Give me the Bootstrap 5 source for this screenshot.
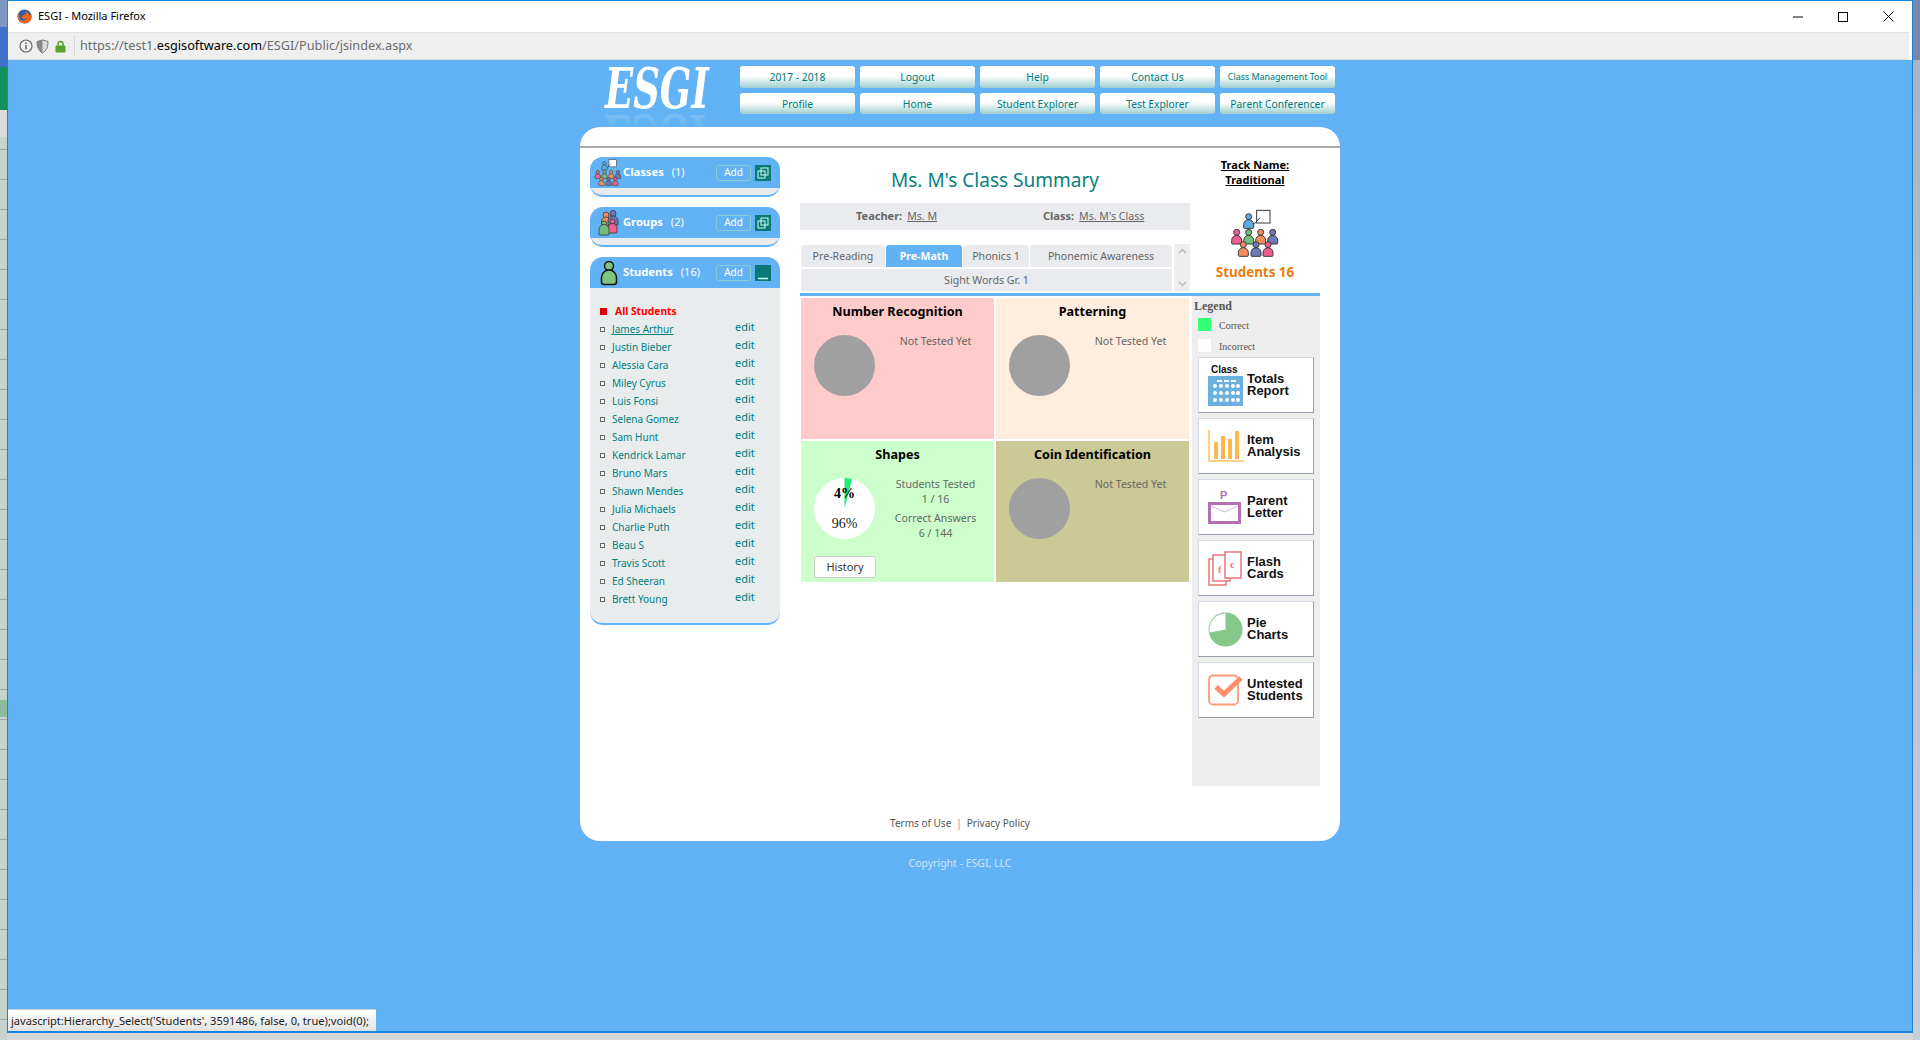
<!doctype html>
<html lang="en">

<head>
  <meta charset="utf-8" />
  <meta name="viewport" content="width=device-width, initial-scale=1" />
  <title>ESGI - Mozilla Firefox</title>
  <link href="https://cdn.jsdelivr.net/npm/bootstrap@5.3.0/dist/css/bootstrap.min.css" rel="stylesheet" />
  <style>
    html, body { height: 100%; }
    body {
      margin: 0;
      overflow: hidden;
      font-family: "Noto Sans", "Open Sans", sans-serif;
      font-size: 10.6px;
      background-color: #d3d8d6;
      background-image:
        linear-gradient(to bottom, #7f96c2 0, #7f96c2 27px, #3f71c9 27px, #3f71c9 67px, #14905a 67px, #14905a 110px, #dcdcdc 110px, #dcdcdc 137px, transparent 137px),
        linear-gradient(to bottom, transparent 700px, #8dbb9d 700px, #8dbb9d 717px, transparent 717px),
        repeating-linear-gradient(to bottom, #c5d3cc 0, #c5d3cc 29px, #9aa5a0 29px, #9aa5a0 30px),
        linear-gradient(to bottom, #7787aa 0, #7787aa 60px, #aab3c4 60px, #c9cfd6 100%);
      background-size: 7px 100%, 7px 100%, 7px 100%, 7px 100%;
      background-position: left top, left top, left top, right top;
      background-repeat: no-repeat;
    }
    .win-frame { margin-left: 7px; width: 1906px; height: 1033px; border: 1px solid #1883d7; border-bottom-width: 2px; background: #fff; }
    .win-title { height: 31px; padding-left: 9px; font-size: 11px; color: #000; }
    .title-left { gap: 6px; }
    .win-btns { gap: 35px; padding-right: 18px; }
    .addr-bar { height: 28px; margin-right: 3px; background: #efefef; border-top: 1px solid #e2e2e2; border-bottom: 1px solid #ddd; padding-left: 11px; font-size: 12.7px; color: #6d6d6d; }
    .addr-sep { width: 1px; height: 20px; background: #d8d8d8; margin: 0 5px 0 8px; }
    .addr-shield { margin-left: 3px; }
    .addr-lock { margin-left: 6px; }
    .addr-host { color: #000; }
    .blue-page { background: #62b3f5; }
    .page-wrap { width: 760px; }
    .top-head { height: 67px; padding-top: 6px; }
    .logo-box { width: 160px; padding-left: 25px; }
    .logo-txt { font-family: "DejaVu Serif", serif; font-weight: 700; font-style: italic; font-size: 56px; line-height: 56px; color: #fff; transform: scaleX(.66); transform-origin: left top; width: 165px; margin-top: -6px; -webkit-box-reflect: below -9px linear-gradient(transparent 55%, rgba(255, 255, 255, .14) 85%); }
    .head-grid { grid-template-columns: repeat(5, 115px); grid-template-rows: 22px 21px; gap: 5px; }
    .head-btn { padding: 0; border: 0; border-radius: 3px; font-size: 10.3px; line-height: 20px; color: #007a7a; background: linear-gradient(to bottom, #fff 0, #fff 45%, #9fcfce 100%); }
    .head-btn-sm { font-size: 8.9px; }
    .main-card { height: 714px; background: #fff; border-radius: 20px; position: relative; }
    .card-strip { height: 21px; border-bottom: 2px solid #aaa; }
    .side-col { width: 190px; margin: 9px 0 0 10px; }
    .side-box { background: #e9eced; border-radius: 13px; border-bottom: 2px solid #62b3f5; margin-bottom: 10px; }
    .side-head { height: 31px; background: #62b3f5; border-radius: 13px 13px 0 0; padding-left: 4px; color: #fff; }
    .side-ico { width: 29px; }
    .side-name { font-size: 11.2px; font-weight: 700; }
    .side-count { margin-left: 8px; font-size: 11px; }
    .add-btn { width: 35px; height: 16px; margin-right: 4px; padding: 0; border: 1px solid #8ccbd4; border-radius: 3px; background: transparent; color: #fff; font-size: 10px; line-height: 13px; }
    .tog-btn { width: 16px; height: 16px; margin-right: 9px; background: #0a7a78; }
    .classes-body { height: 7px; }
    .student-list { padding: 14px 0 15px 10px; margin: 0; list-style: none; font-size: 10px; line-height: 18px; color: #007f80; }
    .student-list li { height: 18px; }
    .bullet { width: 5px; height: 5px; border: 1px solid #666; background: #f4f4f4; margin-right: 7px; }
    .bullet-all { width: 7px; height: 7px; background: #d00; border: 0; margin-right: 8px; }
    .all-name { color: #f00; font-weight: 700; font-size: 10.3px; }
    .stu-name { width: 123px; color: #007f80; text-decoration: none; }
    .stu-edit { color: #007f80; margin-top: -4px; font-size: 11px; text-decoration: none; }
    .center-col { width: 520px; margin-left: 20px; }
    .sum-top { height: 145px; }
    .sum-left { width: 390px; }
    .sum-title { height: 55px; font-size: 19px; line-height: 26px; padding-top: 19px; color: #0a8080; text-align: center; font-weight: 400; margin-bottom: 0; }
    .info-bar { height: 27px; background: #e9ebee; color: #666; margin-bottom: 15px; }
    .info-bar a { color: #666; margin-left: 5px; }
    .info-bar b { font-size: 11px; }
    .info-one { width: 243px; padding-left: 56px; }
    .tab-wrap { padding-left: 1px; }
    .tab-list { width: 372px; gap: 1px; flex-wrap: wrap; }
    .tab-pill { height: 22px; line-height: 22px; background: #e9ebee; color: #666; text-align: center; border-radius: 3px 3px 0 0; }
    .tab-on { background: #62b3f5; color: #fff; font-weight: 700; }
    .tab-scroll { width: 16px; margin: -1px 0 0 1px; height: 47px; background: #eeeeee; color: #bbb; padding: 4px 0; }
    .track-col { width: 130px; color: #000; padding-top: 9px; }
    .track-name { font-weight: 700; font-size: 11px; line-height: 15px; text-decoration: underline; margin-top: 0; margin-bottom: 22px; }
    .stu-total { font-size: 13.4px; font-weight: 700; color: #e87c0c; line-height: 18px; margin-top: 4px; }
    .blue-rule { height: 3px; background: #62b3f5; margin-top: 0; }
    .sum-bottom { height: 490px; }
    .test-grid { width: 392px; padding: 2px 0 0 1px; grid-template-columns: 193px 193px; grid-auto-rows: 141px; gap: 2px; align-content: start; }
    .test-cell { padding: 5px 0 0 13px; color: #666; position: relative; }
    .test-name { margin: 0 0 0 -13px; font-size: 12.6px; line-height: 18px; font-weight: 700; color: #000; text-align: center; }
    .test-body { margin-top: 14px; }
    .grey-pie { width: 61px; height: 61px; border-radius: 50%; background: #a0a0a0; }
    .test-note { width: 119px; padding-left: 2px; text-align: center; margin-top: -1px; line-height: 15px; }
    .cell-red { background: #ffcaca; }
    .cell-peach { background: #ffeddd; }
    .cell-green { background: #ccffcc; }
    .cell-olive { background: #cbc995; }
    .pie-box { width: 61px; height: 61px; }
    .pie-txt { left: 0; right: 0; text-align: center; font-family: "Liberation Serif", serif; font-size: 14px; line-height: 14px; color: #222; }
    .pie-top { top: 9px; font-weight: 700; color: #000; }
    .pie-low { top: 39px; }
    .note-gap { margin-top: 4px; }
    .hist-btn { width: 62px; height: 22px; margin-top: 15px; padding: 0; background: #fff; border: 1px solid #ccc; border-radius: 3px; font-size: 11px; line-height: 18px; color: #333; }
    .legend-col { width: 128px; background: #eee; padding: 3px 0 0 6px; font-family: "Liberation Serif", serif; color: #555; font-size: 10px; }
    .legend-title { font-size: 12px; font-weight: 700; margin-left: -4px; line-height: 14px; margin-bottom: 5px; }
    .legend-row { height: 21px; }
    .swatch { width: 13px; height: 13px; margin-right: 8px; }
    .swatch-ok { background: #33ff77; }
    .swatch-no { background: #fff; }
    .rep-list { margin-top: -3px; gap: 5px; }
    .rep-btn { width: 116px; height: 56px; background: #fff; border: 1px solid; border-color: #d5dbe6 #9aa0ad #9aa0ad #d5dbe6; padding-left: 9px; font-family: "Liberation Sans", sans-serif; font-weight: 700; font-size: 13px; line-height: 12px; color: #111; }
    .rep-ico { width: 39px; flex: none; }
    .foot-links { padding-bottom: 11px; color: #555; font-size: 10px; line-height: 14px; }
    .foot-links a { color: #555; text-decoration: none; }
    .foot-sep { margin: 0 5px; color: #999; }
    .copy-txt { margin-top: 15px; color: #cfe6fb; font-size: 10.5px; line-height: 14px; }
    .status-tip { left: 0; bottom: 0; width: 368px; height: 22px; background: linear-gradient(to bottom, #fff, #e2e2e2); border-top: 1px solid #ccc; font-size: 11.1px; line-height: 21px; color: #222; padding-left: 3px; }
  </style>
</head>

<body>
  <svg width="0" height="0" class="d-block">
    <defs>
      <g id="pp" stroke="#3a3a3a" stroke-width="3">
        <circle cx="0" cy="-15" r="9" />
        <path d="M-15 17v-8a15 15 0 0 1 30 0v8a3 3 0 0 1-3 3h-24a3 3 0 0 1-3-3z" />
      </g>
      <symbol id="class-ico" viewBox="0 0 150 150">
        <rect x="80" y="4" width="40" height="38" fill="#fff" stroke="#3a3a3a" stroke-width="3" />
        <path d="M70 48l20-22" stroke="#3a3a3a" stroke-width="3" />
        <use href="#pp" x="56" y="38" fill="#5dade2" />
        <use href="#pp" x="20" y="85" fill="#ec5f8f" />
        <use href="#pp" x="128" y="85" fill="#6d79b8" />
        <use href="#pp" x="92" y="85" fill="#f58c5c" />
        <use href="#pp" x="56" y="85" fill="#74bb7c" />
        <use href="#pp" x="40" y="122" fill="#f58c5c" />
        <use href="#pp" x="114" y="122" fill="#ec5f8f" />
        <use href="#pp" x="78" y="122" fill="#6d79b8" />
      </symbol>
    </defs>
  </svg>

  <div class="win-frame d-flex flex-column">
    <div class="win-title d-flex align-items-center justify-content-between">
      <div class="title-left d-flex align-items-center">
        <svg width="15" height="15" viewBox="0 0 16 16">
          <circle cx="8" cy="8" r="7.5" fill="#2f5fa8" />
          <path d="M3 2c-2 3-3 7 0 11 3 3 8 3 11 0 2-3 2-6 1-8-1 1-1 2-2 2 0-2-2-4-4-5 1 2 0 3-1 4-2 0-3 1-3 3 1 2 4 2 5 1-1 3-5 3-7 0C2 7 2 5 3 2z" fill="#e8671c" />
        </svg>
        <span>ESGI - Mozilla Firefox</span>
      </div>
      <div class="win-btns d-flex align-items-center">
        <svg width="10" height="10" viewBox="0 0 10 10"><path d="M0 5h10" stroke="#000" /></svg>
        <svg width="10" height="10" viewBox="0 0 10 10"><rect x=".5" y=".5" width="9" height="9" fill="none" stroke="#000" /></svg>
        <svg width="11" height="11" viewBox="0 0 11 11"><path d="M.5.5l10 10M10.5.5l-10 10" stroke="#000" /></svg>
      </div>
    </div>

    <div class="addr-bar d-flex align-items-center">
      <svg width="14" height="14" viewBox="0 0 14 14">
        <circle cx="7" cy="7" r="6" fill="none" stroke="#666" stroke-width="1.2" />
        <path d="M7 6v4.500M7 3.500v1.500" stroke="#666" stroke-width="1.500" />
      </svg>
      <svg width="13" height="15" viewBox="0 0 13 15" class="addr-shield">
        <path d="M6.500 1l5.500 1.500c0 5-1 9-5.500 11.500C2 11.500 1 7.500 1 2.500z" fill="#ddd" stroke="#777" />
        <path d="M6.500 1v13C2 11.500 1 7.500 1 2.500z" fill="#888" />
      </svg>
      <svg width="11" height="13" viewBox="0 0 11 13" class="addr-lock">
        <path d="M3 6V4a2.500 2.500 0 0 1 5 0v2" fill="none" stroke="#57a42b" stroke-width="1.500" />
        <rect x=".5" y="5.500" width="10" height="7" rx="1" fill="#57a42b" />
      </svg>
      <span class="addr-sep"></span>
      <span>https://test1.<span class="addr-host">esgisoftware.com</span>/ESGI/Public/jsindex.aspx</span>
    </div>

    <div class="blue-page flex-grow-1 position-relative">
      <div class="page-wrap mx-auto">
        <div class="top-head d-flex">
          <div class="logo-box">
            <div class="logo-txt">ESGI</div>
          </div>
          <div class="head-grid d-grid">
            <button class="btn head-btn">2017 - 2018</button>
            <button class="btn head-btn">Logout</button>
            <button class="btn head-btn">Help</button>
            <button class="btn head-btn">Contact Us</button>
            <button class="btn head-btn head-btn-sm">Class Management Tool</button>
            <button class="btn head-btn">Profile</button>
            <button class="btn head-btn">Home</button>
            <button class="btn head-btn">Student Explorer</button>
            <button class="btn head-btn">Test Explorer</button>
            <button class="btn head-btn">Parent Conferencer</button>
          </div>
        </div>

        <div class="main-card d-flex flex-column">
          <div class="card-strip"></div>
          <div class="d-flex flex-grow-1">
            <div class="side-col">
              <div class="side-box">
                <div class="side-head d-flex align-items-center">
                  <div class="side-ico"><svg width="28" height="28"><use href="#class-ico" width="28" height="28" /></svg></div>
                  <span class="side-name">Classes</span><span class="side-count">(1)</span>
                  <button class="btn add-btn ms-auto">Add</button>
                  <div class="tog-btn d-flex align-items-center justify-content-center">
                    <svg width="12" height="12" viewBox="0 0 12 12" fill="none" stroke="#cfe"><rect x="4" y="1" width="7" height="7" /><rect x="1" y="4" width="7" height="7" /></svg>
                  </div>
                </div>
                <div class="classes-body"></div>
              </div>
              <div class="side-box">
                <div class="side-head d-flex align-items-center">
                  <div class="side-ico text-center">
                    <svg width="22" height="27" viewBox="0 0 44 54" stroke="#333" stroke-width="1.500">
                      <circle cx="16" cy="12" r="6" fill="#f58c5c" /><path d="M7 34V25a9 9 0 0 1 18 0v9z" fill="#f58c5c" />
                      <circle cx="30" cy="9" r="6" fill="#6d79b8" /><path d="M20 30V24a10 10 0 0 1 20 0v8H20z" fill="#6d79b8" />
                      <circle cx="29" cy="25" r="5" fill="#ec5f8f" /><path d="M20 46V38a9 9 0 0 1 18 0v8a2 2 0 0 1-2 2H22a2 2 0 0 1-2-2z" fill="#ec5f8f" />
                      <circle cx="12" cy="29" r="5" fill="#74bb7c" /><path d="M2 50V41a10 10 0 0 1 20 0v9a2 2 0 0 1-2 2H4a2 2 0 0 1-2-2z" fill="#74bb7c" />
                    </svg>
                  </div>
                  <span class="side-name">Groups</span><span class="side-count">(2)</span>
                  <button class="btn add-btn ms-auto">Add</button>
                  <div class="tog-btn d-flex align-items-center justify-content-center">
                    <svg width="12" height="12" viewBox="0 0 12 12" fill="none" stroke="#cfe"><rect x="4" y="1" width="7" height="7" /><rect x="1" y="4" width="7" height="7" /></svg>
                  </div>
                </div>
                <div class="classes-body"></div>
              </div>
              <div class="side-box">
                <div class="side-head d-flex align-items-center">
                  <div class="side-ico text-center">
                    <svg width="18" height="26" viewBox="0 0 18 26" fill="#7dc47f" stroke="#111" stroke-width="1.500">
                      <circle cx="9" cy="6" r="4.500" />
                      <path d="M1.500 22v-4.500a7.500 7.500 0 0 1 15 0V22a2.500 2.500 0 0 1-2.500 2.500H4A2.500 2.500 0 0 1 1.500 22z" />
                    </svg>
                  </div>
                  <span class="side-name">Students</span><span class="side-count">(16)</span>
                  <button class="btn add-btn ms-auto">Add</button>
                  <div class="tog-btn d-flex align-items-end justify-content-center">
                    <svg width="12" height="6" viewBox="0 0 12 6"><path d="M1 3.500h10" stroke="#cfe" stroke-width="1.500" /></svg>
                  </div>
                </div>
                <ul class="student-list" id="studentList">
                  <li class="d-flex align-items-center"><span class="bullet bullet-all"></span><span class="all-name">All Students</span></li>
                </ul>
              </div>
            </div>

            <div class="center-col">
              <div class="sum-top d-flex">
                <div class="sum-left">
                  <h1 class="sum-title">Ms. M's Class Summary</h1>
                  <div class="info-bar d-flex align-items-center">
                    <div class="info-one"><b>Teacher:</b><a href="#">Ms. M</a></div>
                    <div><b>Class:</b><a href="#">Ms. M's Class</a></div>
                  </div>
                  <div class="tab-wrap d-flex">
                    <div class="tab-list d-flex">
                      <div class="tab-pill" style="width: 84px">Pre-Reading</div>
                      <div class="tab-pill tab-on" style="width: 76px">Pre-Math</div>
                      <div class="tab-pill" style="width: 66px">Phonics 1</div>
                      <div class="tab-pill" style="width: 142px">Phonemic Awareness</div>
                      <div class="tab-pill" style="width: 371px">Sight Words Gr. 1</div>
                    </div>
                    <div class="tab-scroll d-flex flex-column justify-content-between align-items-center">
                      <svg width="9" height="6" viewBox="0 0 9 6"><path d="M1 5l3.500-3.500L8 5" fill="none" stroke="#bbb" stroke-width="1.500" /></svg>
                      <svg width="9" height="6" viewBox="0 0 9 6"><path d="M1 1l3.500 3.500L8 1" fill="none" stroke="#bbb" stroke-width="1.500" /></svg>
                    </div>
                  </div>
                </div>
                <div class="track-col text-center">
                  <div class="track-name">Track Name:<br />Traditional</div>
                  <svg width="50" height="50"><use href="#class-ico" width="50" height="50" /></svg>
                  <div class="stu-total">Students 16</div>
                </div>
              </div>
              <div class="blue-rule"></div>

              <div class="sum-bottom d-flex">
                <div class="test-grid d-grid">
                  <div class="test-cell cell-red">
                    <h2 class="test-name">Number Recognition</h2>
                    <div class="test-body d-flex"><div class="grey-pie"></div><div class="test-note">Not Tested Yet</div></div>
                  </div>
                  <div class="test-cell cell-peach">
                    <h2 class="test-name">Patterning</h2>
                    <div class="test-body d-flex"><div class="grey-pie"></div><div class="test-note">Not Tested Yet</div></div>
                  </div>
                  <div class="test-cell cell-green">
                    <h2 class="test-name">Shapes</h2>
                    <div class="test-body d-flex">
                      <div class="pie-box position-relative">
                        <svg width="61" height="61" viewBox="0 0 61 61">
                          <circle cx="30.500" cy="30.500" r="30.500" fill="#fff" />
                          <path d="M30.500 30.500V0a30.500 30.500 0 0 1 7.600 1z" fill="#22ee77" />
                        </svg>
                        <div class="pie-txt pie-top position-absolute">4%</div>
                        <div class="pie-txt pie-low position-absolute">96%</div>
                      </div>
                      <div class="test-note">
                        Students Tested<br />1 / 16
                        <div class="note-gap">Correct Answers<br />6 / 144</div>
                      </div>
                    </div>
                    <button class="btn hist-btn">History</button>
                  </div>
                  <div class="test-cell cell-olive">
                    <h2 class="test-name">Coin Identification</h2>
                    <div class="test-body d-flex"><div class="grey-pie"></div><div class="test-note">Not Tested Yet</div></div>
                  </div>
                </div>

                <div class="legend-col">
                  <div class="legend-title">Legend</div>
                  <div class="legend-row d-flex align-items-start"><span class="swatch swatch-ok"></span><span>Correct</span></div>
                  <div class="legend-row d-flex align-items-start"><span class="swatch swatch-no"></span><span>Incorrect</span></div>
                  <div class="rep-list d-flex flex-column">
                    <div class="rep-btn d-flex align-items-center">
                      <div class="rep-ico">
                        <svg width="35" height="44" viewBox="0 0 35 44">
                          <text x="3" y="10" font-family="Liberation Sans, sans-serif" font-size="10" font-weight="700" fill="#111">Class</text>
                          <rect x="0" y="13" width="35" height="30" fill="#6cb0e0" />
                          <path d="M9 18h5M16 18h5M23 18h5" stroke="#fff" stroke-width="2" />
                          <g fill="#fff">
                            <circle cx="7" cy="23" r="2" /><circle cx="13" cy="23" r="2" /><circle cx="19" cy="23" r="2" /><circle cx="25" cy="23" r="2" /><circle cx="30" cy="23" r="2" />
                            <circle cx="7" cy="30" r="2" /><circle cx="13" cy="30" r="2" /><circle cx="19" cy="30" r="2" /><circle cx="25" cy="30" r="2" /><circle cx="30" cy="30" r="2" />
                            <circle cx="7" cy="37" r="2" /><circle cx="13" cy="37" r="2" /><circle cx="19" cy="37" r="2" /><circle cx="25" cy="37" r="2" /><circle cx="30" cy="37" r="2" />
                          </g>
                        </svg>
                      </div>
                      <div>Totals<br />Report</div>
                    </div>
                    <div class="rep-btn d-flex align-items-center">
                      <div class="rep-ico">
                        <svg width="36" height="32" viewBox="0 0 36 32">
                          <path d="M1 0v31h35" fill="none" stroke="#ffc06a" stroke-width="1.500" />
                          <g fill="#ffb74d"><rect x="6" y="12" width="4" height="17" /><rect x="13" y="6" width="4" height="23" /><rect x="20" y="9" width="4" height="20" /><rect x="27" y="1" width="4" height="28" /></g>
                        </svg>
                      </div>
                      <div>Item<br />Analysis</div>
                    </div>
                    <div class="rep-btn d-flex align-items-center">
                      <div class="rep-ico">
                        <svg width="33" height="34" viewBox="0 0 33 34">
                          <text x="12" y="9" font-family="Liberation Sans, sans-serif" font-size="11" font-weight="700" fill="#b36fb3">P</text>
                          <rect x="1.500" y="13.500" width="30" height="19" fill="#fff" stroke="#b36fb3" stroke-width="3" />
                          <path d="M3 16l13.500 6L30 16" fill="none" stroke="#d9b3d9" />
                        </svg>
                      </div>
                      <div>Parent<br />Letter</div>
                    </div>
                    <div class="rep-btn d-flex align-items-center">
                      <div class="rep-ico">
                        <svg width="34" height="35" viewBox="0 0 34 35" fill="#fff" stroke="#e87878" stroke-width="1.500">
                          <rect x="1" y="8" width="17" height="26" />
                          <rect x="5" y="4" width="17" height="26" />
                          <rect x="17" y="1" width="16" height="26" />
                          <text x="10" y="22" font-family="Liberation Serif, serif" font-size="10" fill="#e87878" stroke="none">f</text>
                          <text x="22" y="17" font-family="Liberation Serif, serif" font-size="10" fill="#e87878" stroke="none">c</text>
                        </svg>
                      </div>
                      <div>Flash<br />Cards</div>
                    </div>
                    <div class="rep-btn d-flex align-items-center">
                      <div class="rep-ico">
                        <svg width="35" height="35" viewBox="0 0 35 35">
                          <circle cx="17.500" cy="17.500" r="17" fill="#85c98a" />
                          <path d="M17.500 17.500V1.500A16 16 0 0 0 1.700 20.500z" fill="#fff" />
                        </svg>
                      </div>
                      <div>Pie<br />Charts</div>
                    </div>
                    <div class="rep-btn d-flex align-items-center">
                      <div class="rep-ico">
                        <svg width="36" height="32" viewBox="0 0 36 32">
                          <rect x="1" y="1.500" width="29" height="29" rx="4" fill="none" stroke="#ff9a76" stroke-width="1.800" />
                          <path d="M8 13l8 7L33 4" fill="none" stroke="#ff8f6b" stroke-width="5" />
                        </svg>
                      </div>
                      <div>Untested<br />Students</div>
                    </div>
                  </div>
                </div>
              </div>
            </div>
          </div>
          <div class="foot-links text-center">
            <a href="#">Terms of Use</a><span class="foot-sep">|</span><a href="#">Privacy Policy</a>
          </div>
        </div>
      </div>
      <div class="text-center">
        <div class="copy-txt">Copyright - ESGI, LLC</div>
      </div>
      <div class="status-tip position-absolute">javascript:Hierarchy_Select('Students', 3591486, false, 0, true);void(0);</div>
    </div>
  </div>

  <script src="https://cdn.jsdelivr.net/npm/bootstrap@5.3.0/dist/js/bootstrap.bundle.min.js"></script>
  <script>
    const students = ["James Arthur", "Justin Bieber", "Alessia Cara", "Miley Cyrus", "Luis Fonsi", "Selena Gomez", "Sam Hunt", "Kendrick Lamar", "Bruno Mars", "Shawn Mendes", "Julia Michaels", "Charlie Puth", "Beau S", "Travis Scott", "Ed Sheeran", "Brett Young"];
    const list = document.getElementById("studentList");

    students.forEach((name, i) => {
      const underline = i === 0 ? "text-decoration-underline" : "";
      list.innerHTML += `
        <li class="d-flex align-items-center">
          <span class="bullet"></span>
          <a href="#" class="stu-name ${underline}">${name}</a>
          <a href="#" class="stu-edit">edit</a>
        </li>`;
    });
  </script>
</body>

</html>
